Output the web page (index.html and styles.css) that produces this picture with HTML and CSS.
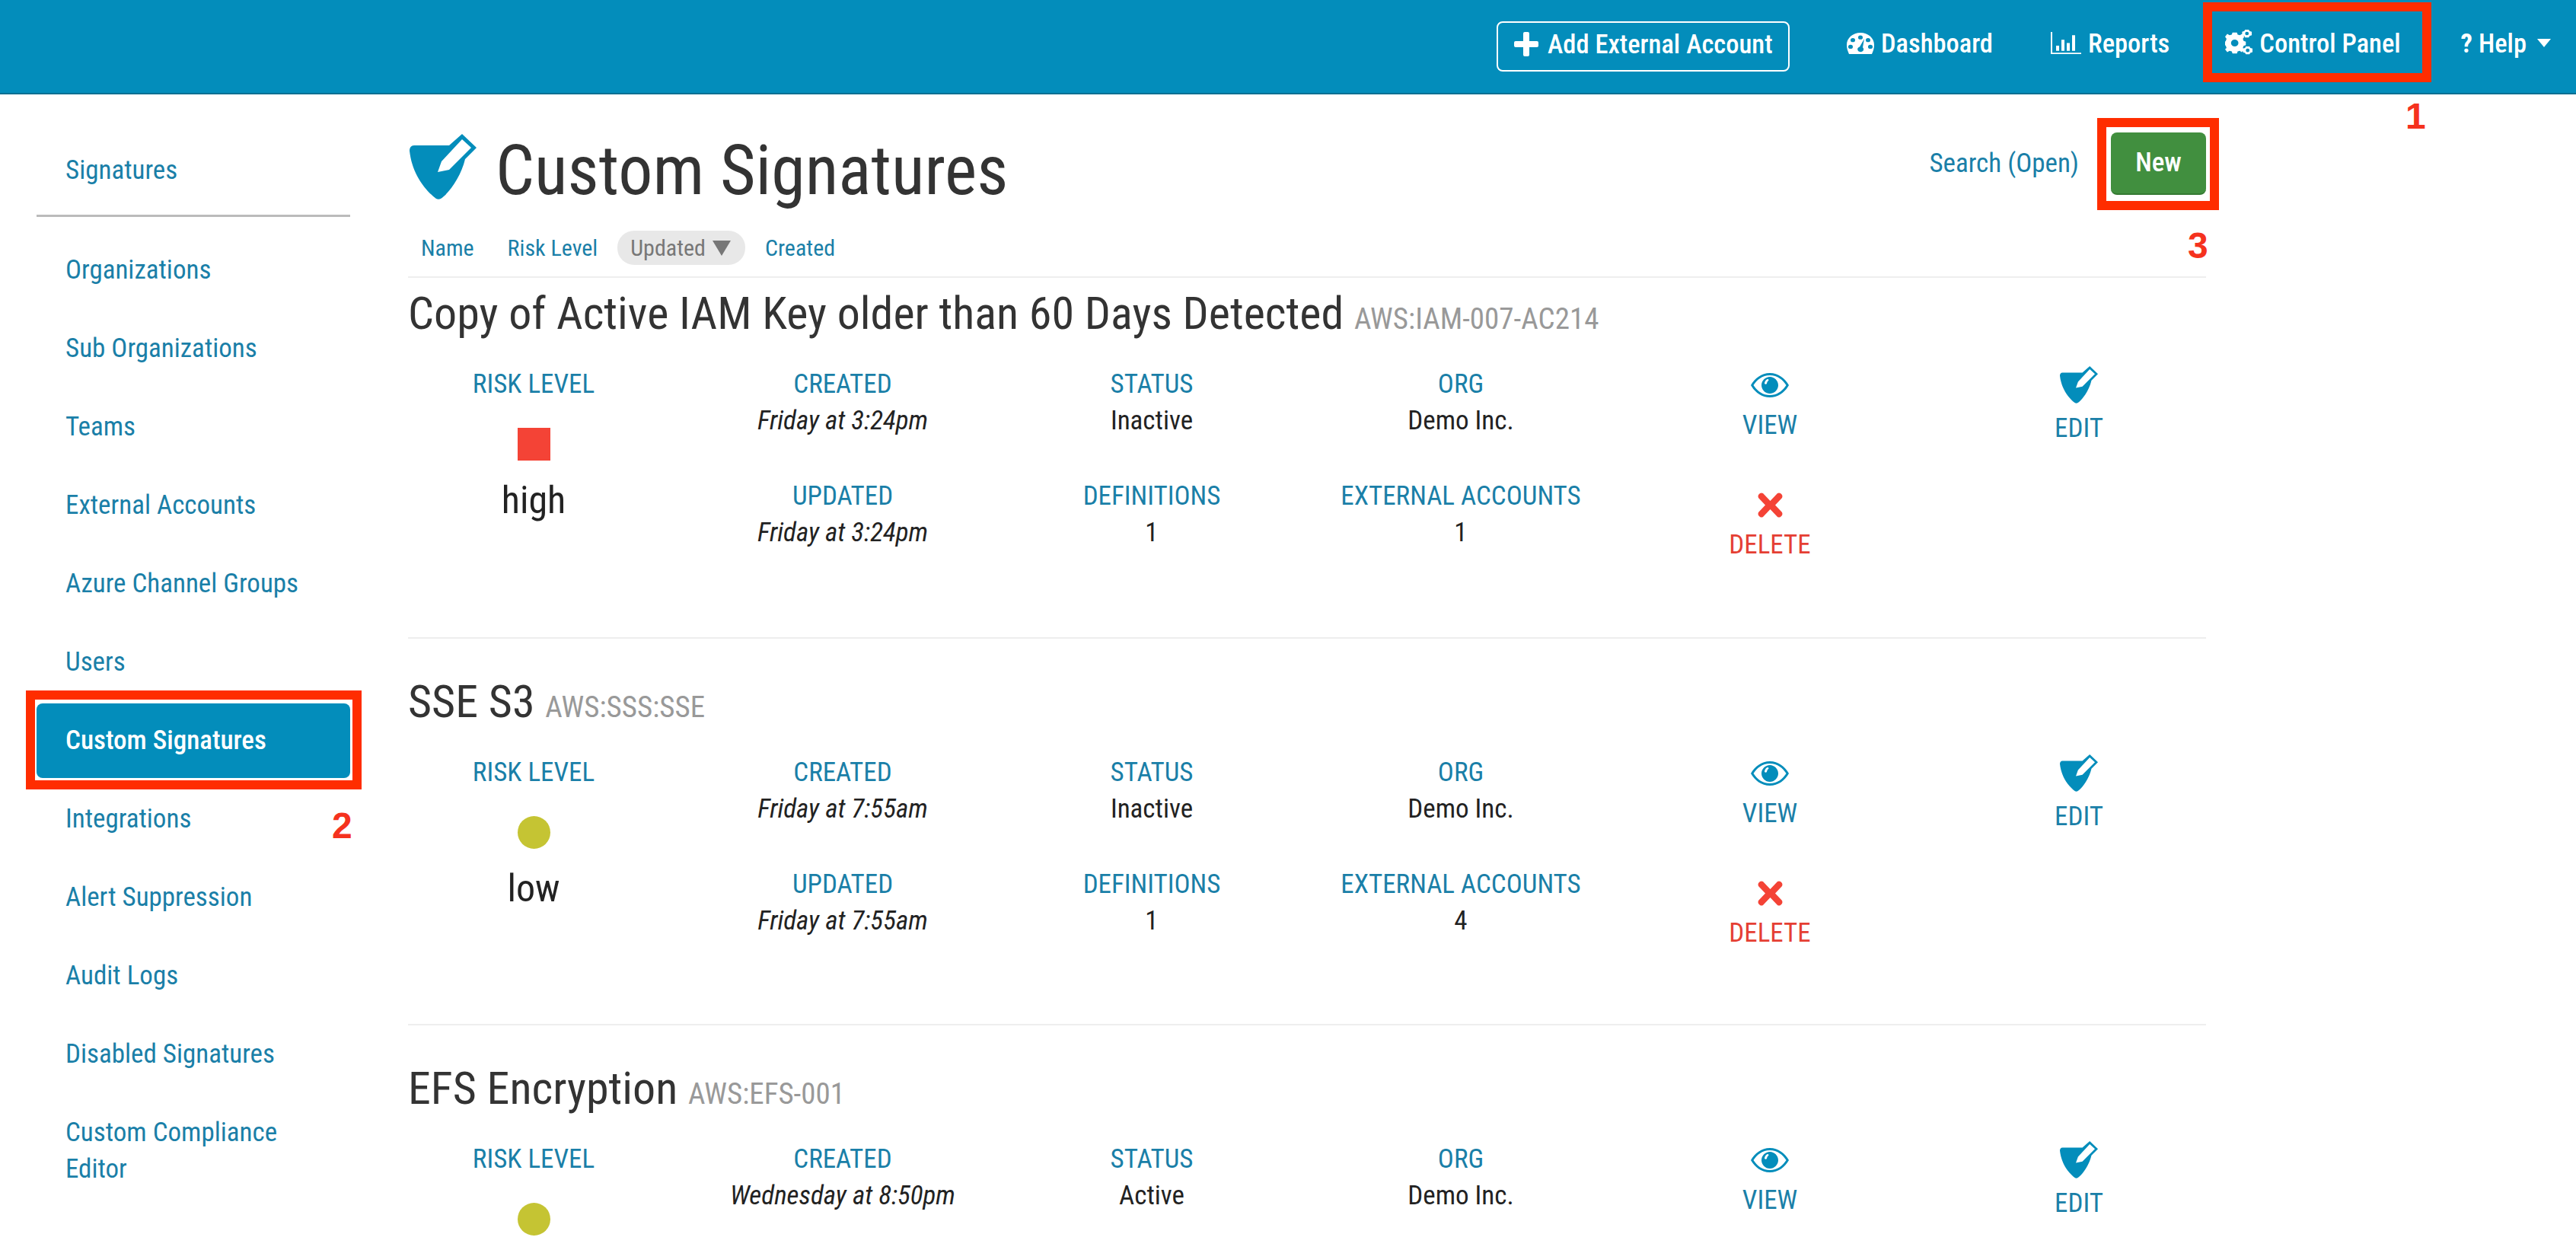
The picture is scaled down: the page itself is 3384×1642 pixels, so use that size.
FILE: index.html
```html
<!DOCTYPE html>
<html>
<head>
  <title>Custom Signatures</title>
  <link rel="stylesheet" href="styles.css">
</head>
<body>
  <svg class="defs" width="0" height="0">
    <symbol id="i-sig" viewBox="0 0 88 86">
      <path fill-rule="evenodd" d="M6 15H52L69 0L88 18L73 33C68 55 52 78 41 85C39 86 37 86 35 85C18 72 3 50 0 22C0 18 2 15 6 15ZM42 36L37 50L52 47L81 18L69 7Z"/>
    </symbol>
    <symbol id="i-eye" viewBox="0 0 50 32">
      <path fill-rule="evenodd" d="M25 0C36 0 45 7 50 16C45 25 36 32 25 32C14 32 5 25 0 16C5 7 14 0 25 0ZM25 3C15 3 8 9 3.500 16C8 23 15 29 25 29C35 29 42 23 46.500 16C42 9 35 3 25 3ZM25 5C31 5 36 10 36 16C36 22 31 27 25 27C19 27 14 22 14 16C14 10 19 5 25 5ZM22 8C19 9 18 12 18 14C19 15 20 15 21 14C21 12 22 11 23 10C24 9 23 8 22 8Z"/>
    </symbol>
    <symbol id="i-x" viewBox="0 0 33 33">
      <path d="M3 1L1 3Q0 5 1 7L10 16.500L1 26Q0 28 1 30L3 32Q5 33 7 32L16.500 22L26 32Q28 33 30 32L32 30Q33 28 32 26L23 16.500L32 7Q33 5 32 3L30 1Q28 0 26 1L16.500 11L7 1Q5 0 3 1Z"/>
    </symbol>
    <symbol id="i-plus" viewBox="0 0 32 32">
      <path d="M12 2Q12 0 14 0H18Q20 0 20 2V12H30Q32 12 32 14V18Q32 20 30 20H20V30Q20 32 18 32H14Q12 32 12 30V20H2Q0 20 0 18V14Q0 12 2 12H12Z"/>
    </symbol>
    <symbol id="i-dash" viewBox="0 0 36 32" preserveAspectRatio="none">
      <path fill-rule="evenodd" d="M18 0C28 0 36 8 36 18C36 23 35 27 33 32H3C1 27 0 23 0 18C0 8 8 0 18 0ZM18 4A3 3 0 1 0 18 10A3 3 0 1 0 18 4ZM8 8A3 3 0 1 0 8 14A3 3 0 1 0 8 8ZM28 8A3 3 0 1 0 28 14A3 3 0 1 0 28 8ZM5 18A3 3 0 1 0 5 24A3 3 0 1 0 5 18ZM31 18A3 3 0 1 0 31 24A3 3 0 1 0 31 18ZM23 9L17 21A4 4 0 1 0 21 22Z"/>
    </symbol>
    <symbol id="i-bars" viewBox="0 0 40 34" preserveAspectRatio="none">
      <path d="M0 0H2V32H40V34H0ZM7 21H11V29H7ZM14 12H18V29H14ZM21 17H25V29H21ZM28 5H32V29H28Z"/>
    </symbol>
    <symbol id="i-cogs" viewBox="0 0 38 38" preserveAspectRatio="none">
      <path fill-rule="evenodd" d="M10 8H16L17 11L20 12L23 10L26 14L24 17L25 20L28 21V26L25 27L24 30L26 33L22 36L20 34L17 35L16 38H10L9 35L6 34L3 36L0 32L2 30L1 27L0 26V21L1 20L2 17L0 14L3 10L6 12L9 11ZM13 18A5 5 0 1 0 13 28A5 5 0 1 0 13 18Z" transform="translate(0 -4)"/>
      <path fill-rule="evenodd" d="M27 0H32L33 2L36 3V8L33 9L32 11H27L26 9L23 8V3L26 2ZM29.500 3A2.500 2.500 0 1 0 29.500 8A2.500 2.500 0 1 0 29.500 3Z"/>
      <path fill-rule="evenodd" d="M28 24H33L34 26L37 27V32L34 33L33 35H28L27 33L24 32V27L27 26ZM30.500 27A2.500 2.500 0 1 0 30.500 32A2.500 2.500 0 1 0 30.500 27Z"/>
    </symbol>
  </svg>

  <header class="topbar">
    <a class="add-btn"><svg class="ic-plus"><use href="#i-plus"/></svg>Add External Account</a>
    <a class="nav-link nav-dash"><svg class="ic-dash"><use href="#i-dash"/></svg>Dashboard</a>
    <a class="nav-link nav-reports"><svg class="ic-bars"><use href="#i-bars"/></svg>Reports</a>
    <a class="nav-link nav-control"><svg class="ic-cogs"><use href="#i-cogs"/></svg>Control Panel</a>
    <a class="nav-link nav-help"><b>?</b>&nbsp;Help<span class="caret"></span></a>
  </header>

  <div class="layout">
    <nav class="sidebar">
      <a class="side-item">Signatures</a>
      <hr class="side-rule">
      <a class="side-item">Organizations</a>
      <a class="side-item">Sub Organizations</a>
      <a class="side-item">Teams</a>
      <a class="side-item">External Accounts</a>
      <a class="side-item">Azure Channel Groups</a>
      <a class="side-item">Users</a>
      <a class="side-item active">Custom Signatures</a>
      <a class="side-item">Integrations</a>
      <a class="side-item">Alert Suppression</a>
      <a class="side-item">Audit Logs</a>
      <a class="side-item">Disabled Signatures</a>
      <a class="side-item">Custom Compliance Editor</a>
    </nav>

    <main class="content">
      <div class="page-head">
        <svg class="ic-title"><use href="#i-sig"/></svg>
        <h1>Custom Signatures</h1>
        <a class="search-link">Search (Open)</a>
        <a class="new-btn">New</a>
      </div>
      <div class="sort-row">
        <a>Name</a>
        <a>Risk Level</a>
        <a class="sorted">Updated <span class="tri"></span></a>
        <a>Created</a>
      </div>

      <section class="sig first">
        <h2>Copy of Active IAM Key older than 60 Days Detected <small>AWS:IAM-007-AC214</small></h2>
        <div class="sig-grid">
          <div class="cell risk">
            <div class="lbl">RISK LEVEL</div>
            <div class="marker square"></div>
            <div class="risk-name">high</div>
          </div>
          <div class="cell"><div class="lbl">CREATED</div><div class="val"><em>Friday at 3:24pm</em></div></div>
          <div class="cell"><div class="lbl">STATUS</div><div class="val">Inactive</div></div>
          <div class="cell"><div class="lbl">ORG</div><div class="val">Demo Inc.</div></div>
          <a class="cell act"><svg class="ic-eye"><use href="#i-eye"/></svg><span>VIEW</span></a>
          <a class="cell act edit"><svg class="ic-edit"><use href="#i-sig"/></svg><span>EDIT</span></a>
          <div class="cell"><div class="lbl">UPDATED</div><div class="val"><em>Friday at 3:24pm</em></div></div>
          <div class="cell"><div class="lbl">DEFINITIONS</div><div class="val">1</div></div>
          <div class="cell"><div class="lbl">EXTERNAL ACCOUNTS</div><div class="val">1</div></div>
          <a class="cell act del"><svg class="ic-x"><use href="#i-x"/></svg><span>DELETE</span></a>
        </div>
      </section>

      <section class="sig">
        <h2>SSE S3 <small>AWS:SSS:SSE</small></h2>
        <div class="sig-grid">
          <div class="cell risk">
            <div class="lbl">RISK LEVEL</div>
            <div class="marker dot"></div>
            <div class="risk-name">low</div>
          </div>
          <div class="cell"><div class="lbl">CREATED</div><div class="val"><em>Friday at 7:55am</em></div></div>
          <div class="cell"><div class="lbl">STATUS</div><div class="val">Inactive</div></div>
          <div class="cell"><div class="lbl">ORG</div><div class="val">Demo Inc.</div></div>
          <a class="cell act"><svg class="ic-eye"><use href="#i-eye"/></svg><span>VIEW</span></a>
          <a class="cell act edit"><svg class="ic-edit"><use href="#i-sig"/></svg><span>EDIT</span></a>
          <div class="cell"><div class="lbl">UPDATED</div><div class="val"><em>Friday at 7:55am</em></div></div>
          <div class="cell"><div class="lbl">DEFINITIONS</div><div class="val">1</div></div>
          <div class="cell"><div class="lbl">EXTERNAL ACCOUNTS</div><div class="val">4</div></div>
          <a class="cell act del"><svg class="ic-x"><use href="#i-x"/></svg><span>DELETE</span></a>
        </div>
      </section>

      <section class="sig">
        <h2>EFS Encryption <small>AWS:EFS-001</small></h2>
        <div class="sig-grid">
          <div class="cell risk">
            <div class="lbl">RISK LEVEL</div>
            <div class="marker dot"></div>
          </div>
          <div class="cell"><div class="lbl">CREATED</div><div class="val"><em>Wednesday at 8:50pm</em></div></div>
          <div class="cell"><div class="lbl">STATUS</div><div class="val">Active</div></div>
          <div class="cell"><div class="lbl">ORG</div><div class="val">Demo Inc.</div></div>
          <a class="cell act"><svg class="ic-eye"><use href="#i-eye"/></svg><span>VIEW</span></a>
          <a class="cell act edit"><svg class="ic-edit"><use href="#i-sig"/></svg><span>EDIT</span></a>
        </div>
      </section>
    </main>
  </div>

  <div class="callout box-control"></div>
  <div class="callout box-side"></div>
  <div class="callout box-new"></div>
  <span class="step step-1">1</span>
  <span class="step step-2">2</span>
  <span class="step step-3">3</span>
</body>
</html>
```

FILE: styles.css
```css
html, body {
  margin: 0;
  padding: 0;
  height: 1642px;
  overflow: hidden;
}
body {
  position: relative;
  font-family: Roboto, "Liberation Sans", sans-serif;
  font-stretch: 75%;
  font-size: 35px;
  line-height: 48px;
  color: #222;
  background-color: #fff;
}
a {
  color: #1a7fa8;
  text-decoration: none;
}
svg {
  fill: currentColor;
}
.defs {
  position: absolute;
}

/* top bar */
.topbar {
  display: flex;
  align-items: center;
  height: 122px;
  padding-left: 1966px;
  background-color: #038dbb;
  border-bottom: 2px solid #0b6f92;
}
.topbar a {
  color: #fff;
  font-size: 34.500px;
  font-weight: 500;
  white-space: nowrap;
}
.add-btn {
  display: flex;
  align-items: center;
  box-sizing: border-box;
  width: 385px;
  height: 66px;
  padding-left: 21px;
  padding-bottom: 7px;
  border: 2px solid #fff;
  border-radius: 8px;
}
.ic-plus {
  width: 32px;
  height: 32px;
  margin-right: 12px;
}
.nav-link {
  display: flex;
  align-items: center;
  padding-bottom: 9px;
  margin-left: 75px;
}
.topbar .nav-reports {
  margin-left: 76px;
}
.topbar .nav-control {
  margin-left: 73px;
}
.topbar .nav-help {
  margin-left: 79px;
}
.ic-dash {
  width: 36px;
  height: 28px;
  margin-right: 9px;
}
.ic-bars {
  width: 40px;
  height: 29px;
  margin-right: 9px;
}
.ic-cogs {
  width: 37px;
  height: 35px;
  margin-right: 8px;
}
.caret {
  width: 0;
  height: 0;
  margin-left: 14px;
  border-left: 9px solid transparent;
  border-right: 9px solid transparent;
  border-top: 11px solid #fff;
}

.layout {
  display: flex;
  align-items: flex-start;
}

/* sidebar */
.sidebar {
  flex: 0 0 412px;
  margin-left: 48px;
  padding-top: 51px;
}
.side-item {
  display: block;
  margin-bottom: 5px;
  padding: 25px 60px 25px 38px;
  border-radius: 8px;
}
.side-item.active {
  background-color: #038dbb;
  color: #fff;
  font-weight: 500;
}
.side-rule {
  height: 3px;
  margin: 9px 0 21px;
  border: 0;
  background-color: #bbb;
}

/* main column */
.content {
  width: 2362px;
  margin-left: 76px;
}
.page-head {
  display: flex;
  align-items: center;
  height: 82px;
  margin-top: 50px;
}
.ic-title {
  width: 88px;
  height: 86px;
  margin-top: 8px;
  margin-left: 2px;
  margin-right: 25px;
  color: #038dbb;
}
h1 {
  flex: 1;
  margin: 20px 0 0;
  font-size: 90px;
  font-weight: 400;
  line-height: 100px;
  color: #333;
}
.search-link {
  margin-right: 42px;
}
.new-btn {
  display: flex;
  align-items: center;
  justify-content: center;
  box-sizing: border-box;
  width: 125px;
  height: 82px;
  background-color: #418f3f;
  border-bottom: 2px solid #357a33;
  border-radius: 8px;
  color: #fff;
  font-weight: 500;
}

.sort-row {
  display: flex;
  align-items: center;
  gap: 44px;
  height: 45px;
  margin-top: 47px;
  padding-left: 17px;
  font-size: 30px;
}
.sort-row a.sorted {
  display: flex;
  align-items: center;
  height: 45px;
  margin: 0 -18px;
  padding: 0 19px 0 17px;
  background-color: #e8e8e8;
  border-radius: 22px;
  color: #777;
}
.tri {
  width: 0;
  height: 0;
  margin-left: 9px;
  border-left: 12px solid transparent;
  border-right: 12px solid transparent;
  border-top: 20px solid #777;
}

/* signature rows */
.sig {
  border-top: 2px solid #eee;
  padding-top: 49px;
  padding-bottom: 60px;
}
.sig.first {
  margin-top: 15px;
  padding-top: 13px;
  padding-bottom: 62px;
}
h2 {
  margin: 0;
  font-size: 60px;
  font-weight: 400;
  line-height: 68px;
  color: #333;
}
h2 small {
  font-size: 39px;
  color: #999;
}
.sig-grid {
  display: grid;
  grid-template-columns: repeat(6, 406px);
  grid-auto-rows: 147px;
  margin-top: 28px;
  margin-left: -38px;
}
.cell {
  text-align: center;
}
.lbl {
  color: #1a7fa8;
}
.risk {
  grid-row: span 2;
}
.marker {
  width: 43px;
  height: 43px;
  margin: 33px auto 0;
}
.square {
  background-color: #f44336;
}
.dot {
  background-color: #c5c433;
  border-radius: 50%;
}
.risk-name {
  margin-top: 20px;
  font-size: 50px;
  line-height: 64px;
}
.act {
  display: flex;
  flex-direction: column;
  align-items: center;
}
.ic-eye {
  width: 50px;
  height: 32px;
  margin-top: 9px;
  margin-bottom: 13px;
  color: #038dbb;
}
.ic-edit {
  width: 50px;
  height: 49px;
  color: #038dbb;
}
.edit span {
  margin-top: 9px;
}
.del {
  grid-column: 5;
  color: #e53f33;
}
.del span {
  margin-top: 12px;
}
.ic-x {
  width: 33px;
  height: 33px;
  margin-top: 19px;
  color: #f44336;
}

/* red annotations on top of the screenshot */
.callout {
  position: absolute;
  box-sizing: border-box;
  border: 12px solid #ff2d00;
}
.box-control {
  left: 2894px;
  top: 3px;
  width: 300px;
  height: 105px;
}
.box-side {
  left: 34px;
  top: 907px;
  width: 441px;
  height: 130px;
}
.box-new {
  left: 2755px;
  top: 155px;
  width: 160px;
  height: 121px;
}
.step {
  position: absolute;
  font-family: "Liberation Sans", sans-serif;
  font-stretch: normal;
  font-size: 48px;
  font-weight: 700;
  line-height: 48px;
  color: #f5321e;
}
.step-1 {
  left: 3160px;
  top: 129px;
}
.step-2 {
  left: 436px;
  top: 1061px;
}
.step-3 {
  left: 2874px;
  top: 299px;
}
```
